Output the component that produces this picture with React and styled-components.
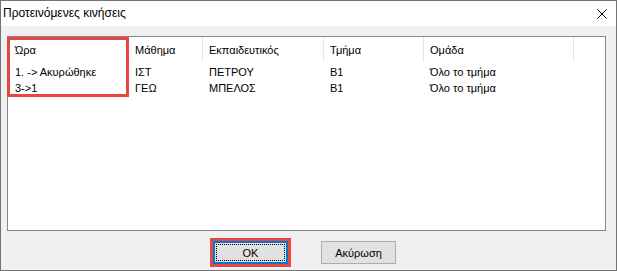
import React from "react";
import styled, { createGlobalStyle } from "styled-components";

const GlobalStyle = createGlobalStyle`
  html, body { margin: 0; padding: 0; background: #ffffff; }
  * { box-sizing: border-box; }
`;

const Window = styled.div`
  width: 617px;
  height: 271px;
  border: 1px solid #737373;
  background: #f0f0f0;
  display: flex;
  flex-direction: column;
  font-family: "Liberation Sans", Arial, sans-serif;
  color: #000;
`;

const TitleBar = styled.div`
  height: 25px;
  background: #ffffff;
  display: flex;
  align-items: center;
  justify-content: space-between;
  padding: 0 9px 0 2px;
`;

const Title = styled.span`
  font-size: 12px;
  line-height: 1;
  padding-bottom: 1px;
`;

const CloseBtn = styled.svg`
  width: 10px;
  height: 10px;
  display: block;
`;

const Body = styled.div`
  flex: 1;
  display: flex;
  flex-direction: column;
  padding: 10px 10px 0 6px;
`;

const ListBox = styled.div`
  position: relative;
  height: 195px;
  border: 1px solid #828790;
  background: #ffffff;
  font-size: 11px;
`;

const cols = "120px 75px 121px 100px 150px 1fr";

const HeaderRow = styled.div`
  display: grid;
  grid-template-columns: ${cols};
  height: 25px;
`;

const HeaderCell = styled.div`
  display: flex;
  align-items: center;
  padding-left: ${(p) => p.$pad || 6}px;
  border-right: ${(p) => (p.$last ? "none" : "1px solid #e5e5e5")};
`;

const Rows = styled.div`
  padding-top: 2px;
`;

const Row = styled.div`
  display: grid;
  grid-template-columns: ${cols};
  height: 16px;
  align-items: center;
`;

const Cell = styled.div`
  padding-left: ${(p) => p.$pad || 6}px;
  white-space: nowrap;
`;

const Highlight = styled.div`
  position: absolute;
  left: ${(p) => p.$left}px;
  top: ${(p) => p.$top}px;
  width: ${(p) => p.$w}px;
  height: ${(p) => p.$h}px;
  border: 3px solid #e84545;
  pointer-events: none;
`;

const ButtonRow = styled.div`
  display: flex;
  margin-top: 10px;
  padding-left: 206px;
  gap: 33px;
`;

const Button = styled.button`
  position: relative;
  width: 75px;
  height: 23px;
  padding: 0;
  font-family: "Liberation Sans", Arial, sans-serif;
  font-size: 11px;
  color: #000;
  background: #e1e1e1;
  border: ${(p) => (p.$default ? "2px solid #0078d7" : "1px solid #adadad")};
  outline: ${(p) => (p.$marked ? "3px solid #e84545" : "none")};
  outline-offset: 0;
  &::after {
    content: "";
    display: ${(p) => (p.$default ? "block" : "none")};
    position: absolute;
    inset: 1px;
    border: 1px dotted #000;
  }
`;

const columns = ["Ώρα", "Μάθημα", "Εκπαιδευτικός", "Τμήμα", "Ομάδα"];
const data = [
  ["1. -> Ακυρώθηκε", "ΙΣΤ", "ΠΕΤΡΟΥ", "Β1", "Όλο το τμήμα"],
  ["3->1", "ΓΕΩ", "ΜΠΕΛΟΣ", "Β1", "Όλο το τμήμα"],
];

export default function App() {
  return (
    <>
      <GlobalStyle />
      <Window>
        <TitleBar>
          <Title>Προτεινόμενες κινήσεις</Title>
          <CloseBtn viewBox="0 0 10 10">
            <path d="M0.5 0.5 L9.5 9.5 M9.5 0.5 L0.5 9.5" stroke="#000" strokeWidth="1" fill="none" />
          </CloseBtn>
        </TitleBar>
        <Body>
          <ListBox>
            <HeaderRow>
              {columns.map((c, i) => (
                <HeaderCell key={c} $pad={i < 2 ? 7 : 6}>{c}</HeaderCell>
              ))}
              <HeaderCell $last />
            </HeaderRow>
            <Rows>
              {data.map((r, ri) => (
                <Row key={ri}>
                  {r.map((v, i) => (
                    <Cell key={i} $pad={i < 2 ? 7 : 6}>{v}</Cell>
                  ))}
                  <Cell />
                </Row>
              ))}
            </Rows>
            <Highlight $left={-1} $top={0} $w={122} $h={60} />
          </ListBox>
          <ButtonRow>
            <Button $default $marked>OK</Button>
            <Button>Ακύρωση</Button>
          </ButtonRow>
        </Body>
      </Window>
    </>
  );
}
